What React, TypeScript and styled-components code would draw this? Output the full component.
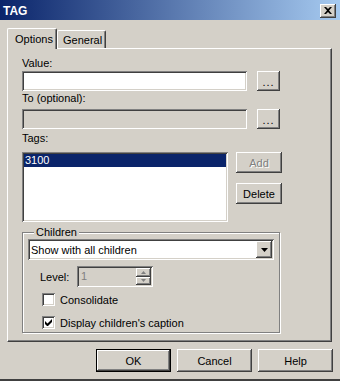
import styled, { createGlobalStyle } from "styled-components";

const Global = createGlobalStyle`
  body {
    margin: 0;
    background: #d4d0c8;
    font-family: "Liberation Sans", Arial, sans-serif;
    font-size: 11px;
    color: #000;
  }
`;

const raised = `
  background: #d4d0c8;
  box-shadow: inset -1px -1px #404040, inset 1px 1px #ffffff,
    inset -2px -2px #808080, inset 2px 2px #d4d0c8;
`;

const sunken = `
  box-shadow: inset 1px 1px #808080, inset -1px -1px #ffffff,
    inset 2px 2px #404040, inset -2px -2px #d4d0c8;
`;

const Window = styled.div`
  width: 340px;
  height: 381px;
  display: flex;
  flex-direction: column;
  background: #d4d0c8;
  overflow: hidden;
  border-bottom: 2px solid #404040;
  box-sizing: border-box;
`;

const TitleBar = styled.div`
  height: 20px;
  flex: none;
  display: flex;
  align-items: center;
  justify-content: space-between;
  padding: 1px 4px 0 3px;
  box-sizing: border-box;
  background: linear-gradient(to right, #0a246a, #a6caf0);
`;

const Title = styled.span`
  color: #fff;
  font-weight: bold;
  font-size: 12px;
`;

const CloseButton = styled.div`
  ${raised}
  width: 16px;
  height: 14px;
  display: flex;
  align-items: center;
  justify-content: center;
`;

const Body = styled.div`
  padding: 8px 7px 0 7px;
  display: flex;
  flex-direction: column;
`;

const TabStrip = styled.div`
  display: flex;
  align-items: flex-end;
  height: 20px;
  position: relative;
  z-index: 1;
`;

const Tab = styled.div<{ $active?: boolean }>`
  box-sizing: border-box;
  height: ${({ $active }) => ($active ? 21 : 18)}px;
  margin-bottom: ${({ $active }) => ($active ? -1 : 0)}px;
  padding: ${({ $active }) => ($active ? "4px 0 0 7px" : "3px 0 0 5px")};
  width: ${({ $active }) => ($active ? 50 : 49)}px;
  background: #d4d0c8;
  border-top: 1px solid #fff;
  border-left: 1px solid #fff;
  border-right: 1px solid #404040;
  border-radius: 2px 2px 0 0;
  box-shadow: inset -1px 0 #808080;
`;

const Panel = styled.div`
  box-sizing: border-box;
  width: 325px;
  height: 294px;
  border-top: 1px solid #fff;
  border-left: 1px solid #fff;
  border-right: 1px solid #404040;
  border-bottom: 1px solid #404040;
  box-shadow: inset -1px -1px #808080;
  padding: 8px 0 0 14px;
  display: flex;
  flex-direction: column;
`;

const Label = styled.div<{ $gap: number; $top?: number }>`
  height: 13px;
  line-height: 13px;
  margin-top: ${({ $top }) => $top ?? 0}px;
  margin-bottom: ${({ $gap }) => $gap}px;
`;

const FieldRow = styled.div`
  display: flex;
  gap: 10px;
  align-items: flex-start;
`;

const TextField = styled.div<{ $disabled?: boolean }>`
  ${sunken}
  box-sizing: border-box;
  width: 225px;
  height: 20px;
  background: ${({ $disabled }) => ($disabled ? "#d4d0c8" : "#fff")};
`;

const Button = styled.div<{ $w: number; $h: number; $disabled?: boolean; $default?: boolean }>`
  ${raised}
  box-sizing: border-box;
  width: ${({ $w }) => $w}px;
  height: ${({ $h }) => $h}px;
  display: flex;
  align-items: center;
  justify-content: center;
  color: ${({ $disabled }) => ($disabled ? "#808080" : "#000")};
  text-shadow: ${({ $disabled }) => ($disabled ? "1px 1px #fff" : "none")};
  ${({ $default }) =>
    $default &&
    `box-shadow: inset 0 0 0 1px #000, inset -2px -2px #404040, inset 2px 2px #ffffff,
      inset -3px -3px #808080;`}
`;

const Dots = styled.span`
  letter-spacing: 1px;
  margin-top: 2px;
`;

const ListRow = styled.div`
  display: flex;
  gap: 8px;
`;

const ListBox = styled.div`
  ${sunken}
  box-sizing: border-box;
  width: 206px;
  height: 70px;
  background: #fff;
  padding: 2px;
`;

const ListItem = styled.div<{ $selected?: boolean }>`
  height: 13px;
  line-height: 13px;
  padding-left: 1px;
  background: ${({ $selected }) => ($selected ? "#0a246a" : "transparent")};
  color: ${({ $selected }) => ($selected ? "#fff" : "#000")};
`;

const SideButtons = styled.div`
  display: flex;
  flex-direction: column;
  gap: 10px;
`;

const Group = styled.fieldset`
  box-sizing: border-box;
  width: 258px;
  margin: 4px 0 0 0;
  padding: 0 5px 3px 5px;
  min-inline-size: 0;
  border: 1px solid #808080;
  box-shadow: inset 1px 1px #fff, 1px 1px #fff;
`;

const Legend = styled.legend`
  margin-left: 6px;
  padding: 0 2px;
  line-height: 13px;
  background: #d4d0c8;
`;

const Combo = styled.div`
  ${sunken}
  box-sizing: border-box;
  width: 246px;
  height: 21px;
  background: #fff;
  display: flex;
  align-items: center;
  justify-content: space-between;
  padding: 2px 2px 2px 3px;
`;

const ComboButton = styled.div`
  ${raised}
  width: 16px;
  height: 17px;
  display: flex;
  align-items: center;
  justify-content: center;
`;

const LevelRow = styled.div`
  display: flex;
  align-items: center;
  margin: 6px 0 0 12px;
`;

const LevelLabel = styled.span`
  width: 37px;
`;

const SpinField = styled.div`
  ${sunken}
  box-sizing: border-box;
  width: 76px;
  height: 21px;
  background: #d4d0c8;
  display: flex;
  justify-content: space-between;
  padding: 2px 2px 2px 4px;
  color: #808080;
  line-height: 16px;
`;

const SpinButtons = styled.div`
  display: flex;
  flex-direction: column;
  width: 15px;
`;

const SpinButton = styled.div`
  ${raised}
  flex: 1;
  display: flex;
  align-items: center;
  justify-content: center;
`;

const CheckRow = styled.div<{ $top: number }>`
  display: flex;
  align-items: center;
  gap: 5px;
  margin: ${({ $top }) => $top}px 0 0 14px;
  height: 13px;
`;

const CheckBox = styled.div`
  ${sunken}
  box-sizing: border-box;
  width: 13px;
  height: 13px;
  background: #fff;
  display: flex;
  align-items: center;
  justify-content: center;
`;

const Footer = styled.div`
  display: flex;
  justify-content: flex-end;
  gap: 6px;
  margin-top: 7px;
`;

function Check({ checked }: { checked?: boolean }) {
  return (
    <CheckBox>
      {checked && (
        <svg width="7" height="7" viewBox="0 0 7 7">
          <path d="M0 2v3l2 2h1l4-4V0L2.5 4.5z" fill="#000" />
        </svg>
      )}
    </CheckBox>
  );
}

function Triangle({ up, color = "#000", w = 7 }: { up?: boolean; color?: string; w?: number }) {
  const h = (w + 1) / 2;
  return (
    <svg width={w} height={h} viewBox={`0 0 ${w} ${h}`}>
      <path d={up ? `M0 ${h}L${w / 2} 0L${w} ${h}z` : `M0 0L${w} 0L${w / 2} ${h}z`} fill={color} />
    </svg>
  );
}

export default function App() {
  return (
    <Window>
      <Global />
      <TitleBar>
        <Title>TAG</Title>
        <CloseButton>
          <svg width="8" height="7" viewBox="0 0 8 7">
            <path d="M0 0h2l2 2 2-2h2L5 3.5 8 7H6L4 5 2 7H0l3-3.5z" fill="#000" />
          </svg>
        </CloseButton>
      </TitleBar>
      <Body>
        <TabStrip>
          <Tab $active>Options</Tab>
          <Tab>General</Tab>
        </TabStrip>
        <Panel>
          <Label $gap={1}>Value:</Label>
          <FieldRow>
            <TextField />
            <Button $w={23} $h={20}>
              <Dots>...</Dots>
            </Button>
          </FieldRow>
          <Label $top={1} $gap={4}>
            To (optional):
          </Label>
          <FieldRow>
            <TextField $disabled />
            <Button $w={23} $h={20}>
              <Dots>...</Dots>
            </Button>
          </FieldRow>
          <Label $top={3} $gap={7}>
            Tags:
          </Label>
          <ListRow>
            <ListBox>
              <ListItem $selected>3100</ListItem>
            </ListBox>
            <SideButtons>
              <Button $w={46} $h={21} $disabled>
                Add
              </Button>
              <Button $w={46} $h={21}>
                Delete
              </Button>
            </SideButtons>
          </ListRow>
          <Group>
            <Legend>Children</Legend>
            <Combo>
              <span>Show with all children</span>
              <ComboButton>
                <Triangle />
              </ComboButton>
            </Combo>
            <LevelRow>
              <LevelLabel>Level:</LevelLabel>
              <SpinField>
                <span>1</span>
                <SpinButtons>
                  <SpinButton>
                    <Triangle up w={5} color="#808080" />
                  </SpinButton>
                  <SpinButton>
                    <Triangle w={5} color="#808080" />
                  </SpinButton>
                </SpinButtons>
              </SpinField>
            </LevelRow>
            <CheckRow $top={6}>
              <Check />
              <span>Consolidate</span>
            </CheckRow>
            <CheckRow $top={10}>
              <Check checked />
              <span>Display children's caption</span>
            </CheckRow>
          </Group>
        </Panel>
        <Footer>
          <Button $w={75} $h={23} $default>
            OK
          </Button>
          <Button $w={75} $h={23}>
            Cancel
          </Button>
          <Button $w={75} $h={23}>
            Help
          </Button>
        </Footer>
      </Body>
    </Window>
  );
}
